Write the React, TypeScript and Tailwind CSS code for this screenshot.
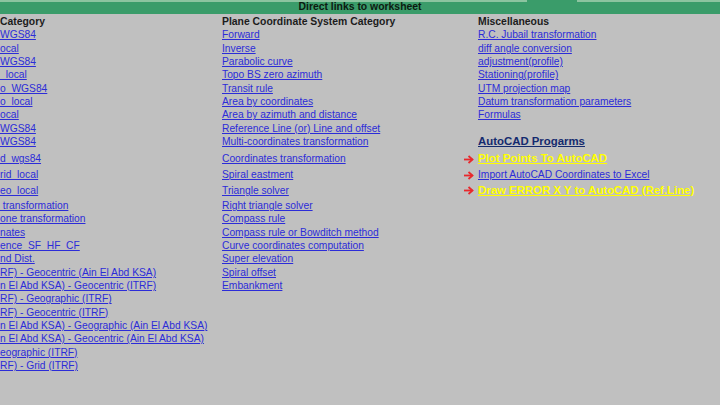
import React from "react";

type Cell = { text: string; kind?: "head" | "link" | "cad" | "yellow" | "none"; arrow?: boolean };
type Row = { c1: Cell; c2: Cell; c3: Cell; tall?: "a" | "b" | "c" };

const L = (text: string): Cell => ({ text, kind: "link" });
const H = (text: string): Cell => ({ text, kind: "head" });
const E: Cell = { text: "", kind: "none" };

const rows: Row[] = [
  { c1: H("Category"), c2: H("Plane Coordinate System Category"), c3: H("Miscellaneous") },
  { c1: L("WGS84"), c2: L("Forward"), c3: L("R.C. Jubail transformation") },
  { c1: L("ocal"), c2: L("Inverse"), c3: L("diff angle conversion") },
  { c1: L("WGS84"), c2: L("Parabolic curve"), c3: L("adjustment(profile)") },
  { c1: L("_local"), c2: L("Topo BS zero azimuth"), c3: L("Stationing(profile)") },
  { c1: L("o_WGS84"), c2: L("Transit rule"), c3: L("UTM projection map") },
  { c1: L("o_local"), c2: L("Area by coordinates"), c3: L("Datum transformation parameters") },
  { c1: L("ocal"), c2: L("Area by azimuth and distance"), c3: L("Formulas") },
  { c1: L("WGS84"), c2: L("Reference Line (or) Line and offset"), c3: E },
  { c1: L("WGS84"), c2: L("Multi-coordinates transformation"), c3: { text: "AutoCAD Progarms", kind: "cad" } },
  { c1: L("d_wgs84"), c2: L("Coordinates transformation"), c3: { text: "Plot Points To AutoCAD", kind: "yellow", arrow: true }, tall: "a" },
  { c1: L("rid_local"), c2: L("Spiral eastment"), c3: { text: "Import AutoCAD Coordinates to Excel", kind: "link", arrow: true }, tall: "b" },
  { c1: L("eo_local"), c2: L("Triangle solver"), c3: { text: "Draw ERROR X Y to AutoCAD (Ref.Line)", kind: "yellow", arrow: true }, tall: "c" },
  { c1: L(" transformation"), c2: L("Right triangle solver"), c3: E },
  { c1: L("one transformation"), c2: L("Compass rule"), c3: E },
  { c1: L("nates"), c2: L("Compass rule or Bowditch method"), c3: E },
  { c1: L("ence_SF_HF_CF"), c2: L("Curve coordinates computation"), c3: E },
  { c1: L("nd Dist."), c2: L("Super elevation"), c3: E },
  { c1: L("RF) - Geocentric (Ain El Abd KSA)"), c2: L("Spiral offset"), c3: E },
  { c1: L("n El Abd KSA) - Geocentric (ITRF)"), c2: L("Embankment"), c3: E },
  { c1: L("RF) - Geographic (ITRF)"), c2: E, c3: E },
  { c1: L("RF) - Geocentric (ITRF)"), c2: E, c3: E },
  { c1: L("n El Abd KSA) - Geographic (Ain El Abd KSA)"), c2: E, c3: E },
  { c1: L("n El Abd KSA) - Geocentric (Ain El Abd KSA)"), c2: E, c3: E },
  { c1: L("eographic (ITRF)"), c2: E, c3: E },
  { c1: L("RF) - Grid (ITRF)"), c2: E, c3: E },
];

function Arrow() {
  return (
    <svg width="11" height="9" viewBox="0 0 11 9" className="shrink-0">
      <line x1="1" y1="4.5" x2="9.5" y2="4.5" stroke="#e8282c" strokeWidth="1.8" />
      <polyline points="5.5,1 9.5,4.5 5.5,8" fill="none" stroke="#e8282c" strokeWidth="1.8" />
    </svg>
  );
}

function Text({ cell }: { cell: Cell }) {
  if (!cell.text) return null;
  switch (cell.kind) {
    case "head":
      return <span className="text-[10.4px] font-bold text-[#1c1c1c] whitespace-pre">{cell.text}</span>;
    case "cad":
      return (
        <span className="text-[11.4px] font-bold text-[#142a6e] underline decoration-1 underline-offset-[1px] whitespace-pre">
          {cell.text}
        </span>
      );
    case "yellow":
      return (
        <span className="text-[11.4px] font-bold text-[#ffff00] underline decoration-1 underline-offset-[1px] whitespace-pre">
          {cell.text}
        </span>
      );
    default:
      return (
        <span className="text-[10.25px] text-[#2c2cd8] underline decoration-1 underline-offset-[1px] whitespace-pre">
          {cell.text}
        </span>
      );
  }
}

function rowClass(t?: "a" | "b" | "c") {
  if (t === "a") return "h-[16.89px] pb-0";
  if (t === "b") return "h-[16.89px] pb-[1px]";
  if (t === "c") return "h-[16.89px] pb-[2px]";
  return "h-[13.33px] pb-[0.5px]";
}

export default function App() {
  return (
    <div
      className="w-[720px] h-[405px] overflow-hidden bg-[#c0c0c0] flex flex-col"
      style={{ fontFamily: '"Liberation Sans", Arial, sans-serif' }}
    >
      <div className="flex h-[1.5px] bg-[#8cc4a0]">
        <div className="w-[527px]" />
        <div className="w-[50px] bg-[#3a9c6a]" />
      </div>
      <div className="h-[12px] bg-[#3a9c6a] flex items-center justify-center">
        <span className="text-[10.4px] font-bold leading-none text-[#0c1a10]">Direct links to worksheet</span>
      </div>
      <div className="h-[1px]" />
      {rows.map((r, i) => (
        <div key={i} className={`flex items-end leading-none ${rowClass(r.tall)}`}>
          <div className="w-[222px] overflow-hidden flex items-end">
            <Text cell={r.c1} />
          </div>
          <div className="w-[241px] flex items-end">
            <Text cell={r.c2} />
          </div>
          <div className="flex-1 flex items-end">
            {r.c3.arrow ? (
              <div className="w-[15px] flex items-center pb-[1px]">
                <Arrow />
              </div>
            ) : (
              <div className="w-[15px]" />
            )}
            <Text cell={r.c3} />
          </div>
        </div>
      ))}
    </div>
  );
}
